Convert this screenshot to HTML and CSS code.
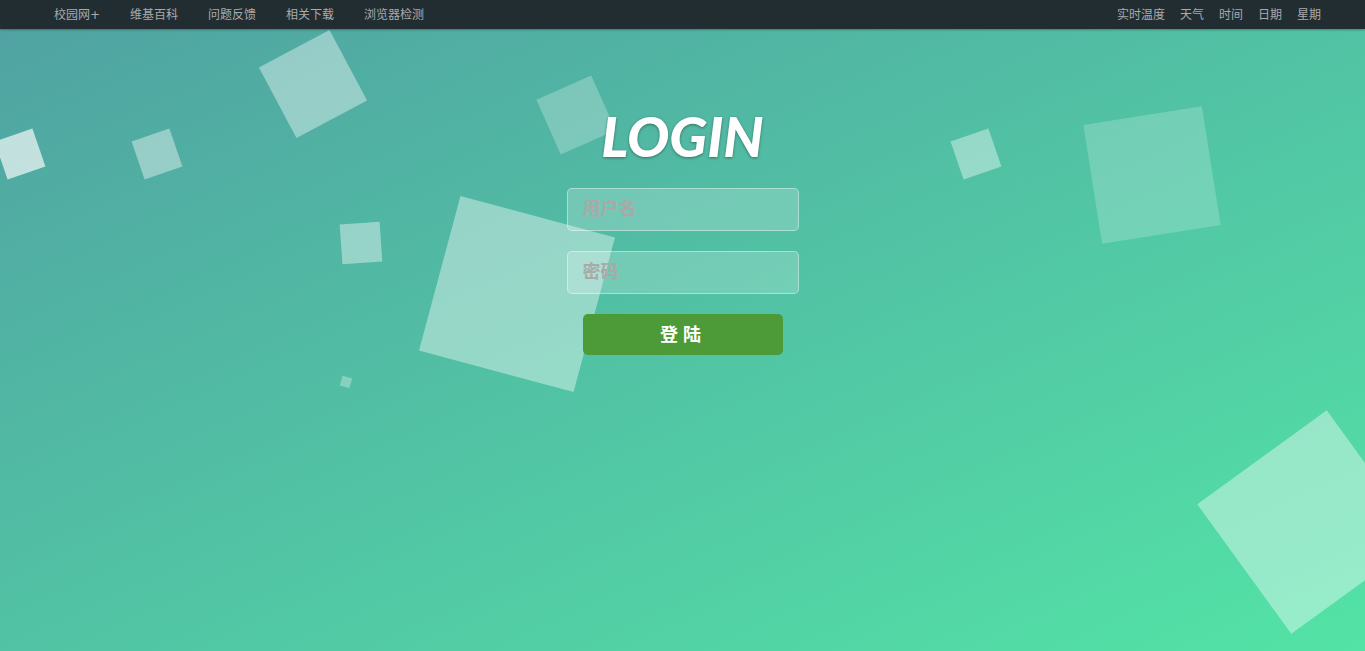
FILE: index.html
```html
<!DOCTYPE html>
<html lang="zh-CN">
<head>
<meta charset="utf-8">
<meta name="viewport" content="width=device-width, initial-scale=1">
<title>Login</title>
<link rel="stylesheet" href="styles.css">
</head>
<body>
<header class="topbar">
  <nav class="links">
    <a href="#">校园网+</a>
    <a href="#">维基百科</a>
    <a href="#">问题反馈</a>
    <a href="#">相关下载</a>
    <a href="#">浏览器检测</a>
  </nav>
  <ul class="status">
    <li>实时温度</li>
    <li>天气</li>
    <li>时间</li>
    <li>日期</li>
    <li>星期</li>
  </ul>
</header>
<main class="stage">
  <div class="squares" aria-hidden="true">
    <span class="sq sq-edge"></span>
    <span class="sq sq-left"></span>
    <span class="sq sq-top"></span>
    <span class="sq sq-title"></span>
    <span class="sq sq-mid"></span>
    <span class="sq sq-form"></span>
    <span class="sq sq-tiny"></span>
    <span class="sq sq-right"></span>
    <span class="sq sq-pale"></span>
    <span class="sq sq-corner"></span>
  </div>
  <form class="login">
    <h1 class="title">LOGIN</h1>
    <input class="field" type="text" placeholder="用户名" aria-label="用户名">
    <input class="field" type="password" placeholder="密码" aria-label="密码">
    <button class="submit" type="button">登 陆</button>
  </form>
</main>
</body>
</html>
```
FILE: styles.css
```css
* { box-sizing: border-box; }

body {
  display: flex;
  flex-direction: column;
  min-height: 100vh;
  margin: 0;
  font-family: "DejaVu Sans", "Noto Sans CJK SC", sans-serif;
}

.topbar {
  display: flex;
  align-items: center;
  justify-content: space-between;
  height: 29px;
  padding: 0 44px 0 54px;
  background: #222d32;
  box-shadow: 0 1px 2px rgba(0, 0, 0, .3);
  color: #aaa;
  font-size: 12px;
  line-height: 28px;
  white-space: nowrap;
  z-index: 1;
}

.links { display: flex; gap: 30px; }
.links a { color: inherit; text-decoration: none; }

.status {
  display: flex;
  gap: 15px;
  margin: 0;
  padding: 0;
  list-style: none;
}

.stage {
  position: relative;
  flex: 1;
  overflow: hidden;
  background: linear-gradient(to bottom right, #50a3a2, #53e3a6);
}

.squares { position: absolute; inset: 0; }
.sq {
  position: absolute;
  width: 40px;
  height: 40px;
  background: rgba(255, 255, 255, .4);
}
.sq-edge { left: 0; top: 105px; transform: rotate(-19deg); background: rgba(255, 255, 255, .65); }
.sq-left { left: 10%; top: 105px; transform: rotate(-19deg); }
.sq-top { left: 20%; top: 15px; width: 80px; height: 80px; transform: rotate(-28deg); }
.sq-title { left: 40%; top: 56px; width: 60px; height: 60px; transform: rotate(-24deg); background: rgba(255, 255, 255, .25); }
.sq-mid { left: 25%; top: 194px; transform: rotate(-4deg); }
.sq-form { left: 32%; top: 185px; width: 160px; height: 160px; transform: rotate(15deg); }
.sq-tiny { left: 25%; top: 348px; width: 10px; height: 10px; transform: rotate(16deg); background: rgba(255, 255, 255, .3); }
.sq-right { left: 70%; top: 105px; transform: rotate(-19deg); }
.sq-pale { left: 80%; top: 86px; width: 120px; height: 120px; transform: rotate(-9deg); background: rgba(255, 255, 255, .2); }
.sq-corner { left: 90%; top: 413px; width: 160px; height: 160px; transform: rotate(-36deg); }

.login {
  position: relative;
  display: flex;
  flex-direction: column;
  align-items: center;
  gap: 20px;
  padding-top: 75px;
}

.title {
  margin: 0;
  color: #fff;
  font: italic 900 56px/64px Lato, "Noto Sans", sans-serif;
  text-shadow: 0 1px 3px rgba(0, 0, 0, .4);
}

.field {
  width: 232px;
  height: 43px;
  padding: 0 15px;
  border: 1px solid rgba(255, 255, 255, .4);
  border-radius: 5px;
  outline: 0;
  background: rgba(255, 255, 255, .2);
  color: #fff;
  font: bold 18px "Liberation Sans", "Noto Sans CJK SC", sans-serif;
}
.field::placeholder { color: #a9a9a9; opacity: 1; }

.submit {
  width: 200px;
  height: 41px;
  padding: 0 4px 4px 0;
  border: 0;
  border-radius: 5px;
  background: #4c9a38;
  color: #fff;
  font: bold 18px "Liberation Sans", "Noto Sans CJK SC", sans-serif;
  cursor: pointer;
}
```
